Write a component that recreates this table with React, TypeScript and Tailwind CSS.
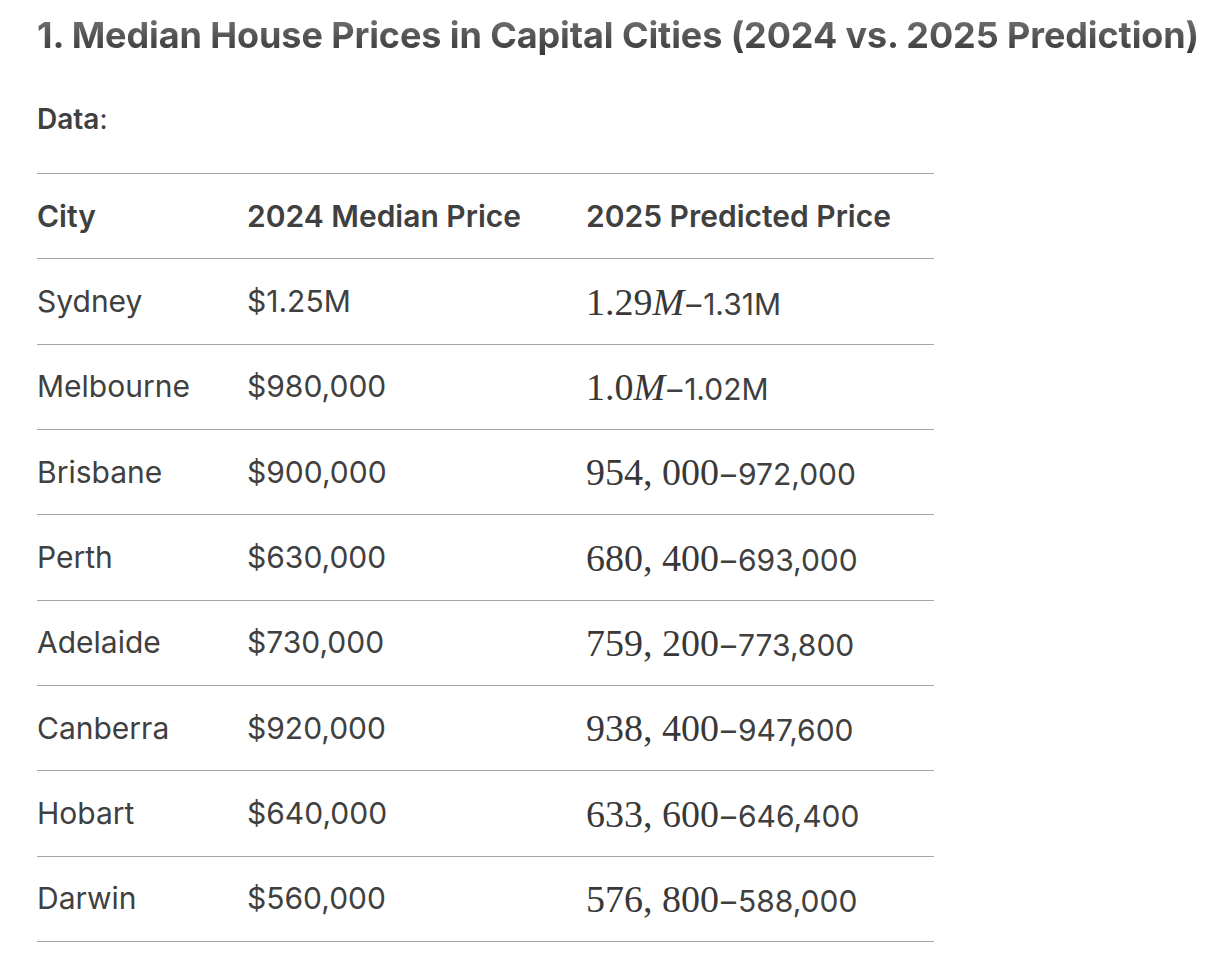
import React from "react";

type Row = {
  city: string;
  median: string;
  mathPart: string;
  italicM?: boolean;
  rest: string;
};

const rows: Row[] = [
  { city: "Sydney", median: "$1.25M", mathPart: "1.29", italicM: true, rest: "1.31M" },
  { city: "Melbourne", median: "$980,000", mathPart: "1.0", italicM: true, rest: "1.02M" },
  { city: "Brisbane", median: "$900,000", mathPart: "954, 000", rest: "972,000" },
  { city: "Perth", median: "$630,000", mathPart: "680, 400", rest: "693,000" },
  { city: "Adelaide", median: "$730,000", mathPart: "759, 200", rest: "773,800" },
  { city: "Canberra", median: "$920,000", mathPart: "938, 400", rest: "947,600" },
  { city: "Hobart", median: "$640,000", mathPart: "633, 600", rest: "646,400" },
  { city: "Darwin", median: "$560,000", mathPart: "576, 800", rest: "588,000" },
];

const rowClass =
  "grid grid-cols-[210px_339px_348px] items-center h-[85.35px] text-[30px] border-b-[1.5px] border-[#a6a6a6]";

export default function App() {
  return (
    <div className="min-h-screen bg-white pl-[37px] pt-[12px] text-[#404040] font-['Inter',sans-serif]">
      {/* heading */}
      <h1 className="text-[36px] leading-[46px] font-bold tracking-[-0.1px] bg-gradient-to-b from-[#7c7c7c] to-[#333333] bg-clip-text text-transparent w-fit">
        1. Median House Prices in Capital Cities (2024 vs. 2025 Prediction)
      </h1>

      <p className="mt-[41px] text-[28px] leading-[40px]">
        <span className="font-semibold">Data</span>:
      </p>

      <div className="mt-[34px] w-[897px] border-t-[1.5px] border-[#a6a6a6]">
        <div className={rowClass + " font-semibold"}>
          <div>City</div>
          <div>2024 Median Price</div>
          <div>2025 Predicted Price</div>
        </div>
        {rows.map((r) => (
          <div key={r.city} className={rowClass}>
            <div>{r.city}</div>
            <div>{r.median}</div>
            <div className="whitespace-nowrap leading-none">
              <span className="text-[38px] text-[#383838] font-['Liberation_Serif',serif]">
                {r.mathPart}
                {r.italicM && <span className="italic">M</span>}
              </span>
              <span className="px-[2px]">–</span>
              {r.rest}
            </div>
          </div>
        ))}
      </div>
    </div>
  );
}
